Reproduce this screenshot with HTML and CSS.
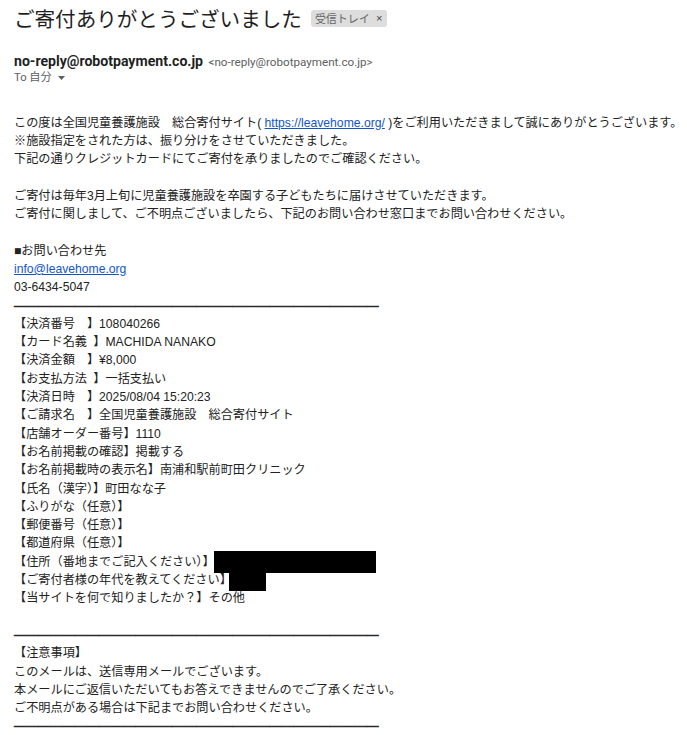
FILE: index.html
```html
<!DOCTYPE html>
<html lang="ja">
<head>
<meta charset="utf-8">
<title>ご寄付ありがとうございました</title>
<link rel="stylesheet" href="styles.css">
</head>
<body>
<div class="mail">
  <div class="subject">
    <h1 class="subject-title">ご寄付ありがとうございました</h1>
    <span class="label"><span class="label-text">受信トレイ</span><span class="label-x">×</span></span>
  </div>
  <div class="from">
    <span class="from-name">no-reply@robotpayment.co.jp</span>
    <span class="from-addr">&lt;no-reply@robotpayment.co.jp&gt;</span>
  </div>
  <div class="to">To 自分 <svg class="to-caret" width="7" height="4" viewBox="0 0 7 4"><path d="M0 0h7L3.5 4z" fill="#5e5e5e"/></svg></div>

  <div class="body">
    <div>この度は全国児童養護施設　総合寄付サイト( <a href="#">https://leavehome.org/</a> )をご利用いただきまして誠にありがとうございます。</div>
    <div>※施設指定をされた方は、振り分けをさせていただきました。</div>
    <div>下記の通りクレジットカードにてご寄付を承りましたのでご確認ください。</div>
    <div class="blank"><br></div>
    <div>ご寄付は毎年3月上旬に児童養護施設を卒園する子どもたちに届けさせていただきます。</div>
    <div>ご寄付に関しまして、ご不明点ございましたら、下記のお問い合わせ窓口までお問い合わせください。</div>
    <div class="blank"><br></div>
    <div>■お問い合わせ先</div>
    <div><a href="#">info@leavehome.org</a></div>
    <div>03-6434-5047</div>
    <div class="rule">――――――――――――――――――――――――――――――</div>
    <div>【決済番号　】108040266</div>
    <div>【カード名義<span class="hsp"> </span>】MACHIDA NANAKO</div>
    <div>【決済金額　】¥8,000</div>
    <div>【お支払方法<span class="hsp"> </span>】一括支払い</div>
    <div>【決済日時　】2025/08/04 15:20:23</div>
    <div>【ご請求名　】全国児童養護施設　総合寄付サイト</div>
    <div>【店舗オーダー番号】1110</div>
    <div>【お名前掲載の確認】掲載する</div>
    <div>【お名前掲載時の表示名】南浦和駅前町田クリニック</div>
    <div>【氏名（漢字）】町田なな子</div>
    <div>【ふりがな（任意）】</div>
    <div>【郵便番号（任意）】</div>
    <div>【都道府県（任意）】</div>
    <div>【住所（番地までご記入ください）】<span class="redact redact-address"></span></div>
    <div>【ご寄付者様の年代を教えてください】<span class="redact redact-age"></span></div>
    <div>【当サイトを何で知りましたか？】その他</div>
    <div class="blank"><br></div>
    <div class="rule">――――――――――――――――――――――――――――――</div>
    <div>【注意事項】</div>
    <div>このメールは、送信専用メールでございます。</div>
    <div>本メールにご返信いただいてもお答えできませんのでご了承ください。</div>
    <div>ご不明点がある場合は下記までお問い合わせください。</div>
    <div class="rule">――――――――――――――――――――――――――――――</div>
  </div>
</div>
</body>
</html>
```

FILE: styles.css
```css
html, body {
  margin: 0;
  padding: 0;
  background: #ffffff;
}

.mail {
  padding: 0 14px;
  font-family: "Liberation Sans", Arial, "Noto Sans CJK JP", sans-serif;
  color: #222222;
}

.subject {
  display: flex;
  align-items: center;
  gap: 9px;
  margin-top: 6px;
  height: 24px;
}

.subject-title {
  margin: 0;
  font-family: "Noto Sans CJK JP", sans-serif;
  font-weight: 400;
  font-size: 20.57px;
  line-height: 24px;
  color: #1f1f1f;
  letter-spacing: 0;
}

.label {
  display: inline-flex;
  align-items: center;
  height: 17px;
  padding: 0 5px 0 4px;
  background: #dddddd;
  border-radius: 3px;
  font-family: "Noto Sans CJK JP", sans-serif;
  font-size: 11px;
  line-height: 17px;
  color: #666666;
  margin-top: 1px;
}

.label-x {
  margin-left: 6px;
  font-family: "Liberation Sans", sans-serif;
  font-size: 11px;
  color: #444444;
}

.from {
  margin-top: 22px;
  height: 18px;
  line-height: 18px;
  white-space: nowrap;
}

.from-name {
  font-family: Roboto, "Liberation Sans", sans-serif;
  font-weight: 700;
  font-size: 14.1px;
  color: #1f1f1f;
}

.from-addr {
  font-family: Roboto, "Liberation Sans", sans-serif;
  font-size: 11.65px;
  color: #5e5e5e;
  margin-left: 1px;
}

.to {
  height: 16px;
  line-height: 16px;
  font-family: Roboto, "Liberation Sans", "Noto Sans CJK JP", sans-serif;
  font-size: 11.22px;
  color: #5e5e5e;
}

.to-caret {
  margin-left: 3px;
  vertical-align: 1px;
}

.body {
  margin-top: 27.6px;
  font-size: 12.16px;
  line-height: 18.3px;
  white-space: nowrap;
}

.body a {
  color: #1155cc;
  text-decoration: underline;
}

.rule {
  color: #2a2a2a;
  -webkit-text-stroke: 0.45px #2a2a2a;
  letter-spacing: 0;
}

.hsp {
  letter-spacing: 3px;
}

.redact {
  display: inline-block;
  background: #000000;
  vertical-align: top;
}

.redact-address {
  width: 162px;
  height: 22px;
  margin: -2px 0 -2px -1px;
}

.redact-age {
  width: 37px;
  height: 18px;
  margin: 2px 0 -2px -3px;
}
```
